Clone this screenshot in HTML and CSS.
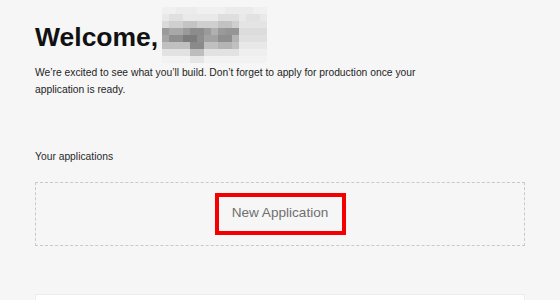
FILE: index.html
```html
<!DOCTYPE html>
<html lang="en">
<head>
<meta charset="utf-8">
<title>Welcome</title>
<link rel="stylesheet" href="styles.css">
</head>
<body>
<main class="page">
  <h1 class="welcome">
    <span>Welcome,</span>
    <svg class="name-mosaic" width="105" height="56" viewBox="0 0 15 8" shape-rendering="crispEdges" aria-label="hidden name">
      <rect x="0" y="0" width="15" height="8" fill="#f3f3f3"/>
      <g>
        <rect x="0" y="0" width="15" height="1" fill="#f0f0f0"/>
        <rect x="2" y="0" width="3" height="1" fill="#ececec"/>
        <rect x="9" y="0" width="4" height="1" fill="#ebebeb"/>
        <rect x="0" y="1" width="15" height="1" fill="#e9e9e9"/>
        <rect x="1" y="1" width="2" height="1" fill="#e0e0e0"/>
        <rect x="8" y="1" width="3" height="1" fill="#dedede"/>
        <rect x="12" y="1" width="2" height="1" fill="#e2e2e2"/>
        <rect x="0" y="2" width="11" height="1" fill="#cfcfcf"/>
        <rect x="0" y="2" width="1" height="1" fill="#dadada"/>
        <rect x="3" y="2" width="2" height="1" fill="#c4c4c4"/>
        <rect x="8" y="2" width="2" height="1" fill="#c2c2c2"/>
        <rect x="11" y="2" width="4" height="1" fill="#e4e4e4"/>
        <rect x="0" y="3" width="11" height="1" fill="#9a9a9a"/>
        <rect x="1" y="3" width="2" height="1" fill="#a8a8a8"/>
        <rect x="4" y="3" width="2" height="1" fill="#8c8c8c"/>
        <rect x="7" y="3" width="1" height="1" fill="#b0b0b0"/>
        <rect x="9" y="3" width="2" height="1" fill="#959595"/>
        <rect x="11" y="3" width="4" height="1" fill="#dcdcdc"/>
        <rect x="0" y="4" width="11" height="1" fill="#8e8e8e"/>
        <rect x="0" y="4" width="1" height="1" fill="#a5a5a5"/>
        <rect x="3" y="4" width="2" height="1" fill="#7c7c7c"/>
        <rect x="6" y="4" width="2" height="1" fill="#a2a2a2"/>
        <rect x="10" y="4" width="1" height="1" fill="#b3b3b3"/>
        <rect x="11" y="4" width="4" height="1" fill="#e0e0e0"/>
        <rect x="0" y="5" width="11" height="1" fill="#c0c0c0"/>
        <rect x="4" y="5" width="2" height="1" fill="#8a8a8a"/>
        <rect x="8" y="5" width="2" height="1" fill="#b4b4b4"/>
        <rect x="11" y="5" width="4" height="1" fill="#e8e8e8"/>
        <rect x="0" y="6" width="11" height="1" fill="#e2e2e2"/>
        <rect x="4" y="6" width="2" height="1" fill="#bdbdbd"/>
        <rect x="11" y="6" width="4" height="1" fill="#efefef"/>
        <rect x="0" y="7" width="15" height="1" fill="#f2f2f2"/>
        <rect x="4" y="7" width="2" height="1" fill="#e6e6e6"/>
      </g>
    </svg>
  </h1>
  <p class="intro">We’re excited to see what you’ll build. Don’t forget to apply for production once your application is ready.</p>
  <h2 class="section-label">Your applications</h2>
  <div class="app-box">
    <button class="new-app" type="button">New Application</button>
  </div>
  <div class="card"></div>
</main>
</body>
</html>
```

FILE: styles.css
```css
html, body {
  margin: 0;
  padding: 0;
  background: #f6f6f6;
}

body {
  font-family: "Liberation Sans", Arial, sans-serif;
  overflow: hidden;
}

.page {
  padding: 22px 35px 0;
}

.welcome {
  display: flex;
  align-items: center;
  gap: 4px;
  margin: 0;
  font-size: 26.5px;
  line-height: 30px;
  font-weight: 700;
  color: #111;
}

.name-mosaic {
  display: block;
  margin-top: -19px;
  margin-bottom: -15px;
}

.intro {
  margin: 11.5px 0 0;
  max-width: 420px;
  font-size: 10.3px;
  line-height: 17px;
  color: #1e1e1e;
}

.section-label {
  margin: 50px 0 0;
  font-size: 10.3px;
  line-height: 17px;
  font-weight: 400;
  color: #2a2a2a;
}

.app-box {
  box-sizing: border-box;
  margin-top: 17.5px;
  height: 64px;
  border: 1px dashed #c9c9c9;
  display: flex;
  align-items: center;
  justify-content: center;
}

.new-app {
  box-sizing: border-box;
  width: 131px;
  height: 42px;
  padding: 0 0 3px;
  border: 4px solid #f40000;
  background: transparent;
  font-family: "Liberation Sans", Arial, sans-serif;
  font-size: 13.6px;
  color: #707070;
  cursor: pointer;
}

.card {
  margin-top: 48px;
  height: 40px;
  background: #fff;
  border: 1px solid #ececec;
}
```
